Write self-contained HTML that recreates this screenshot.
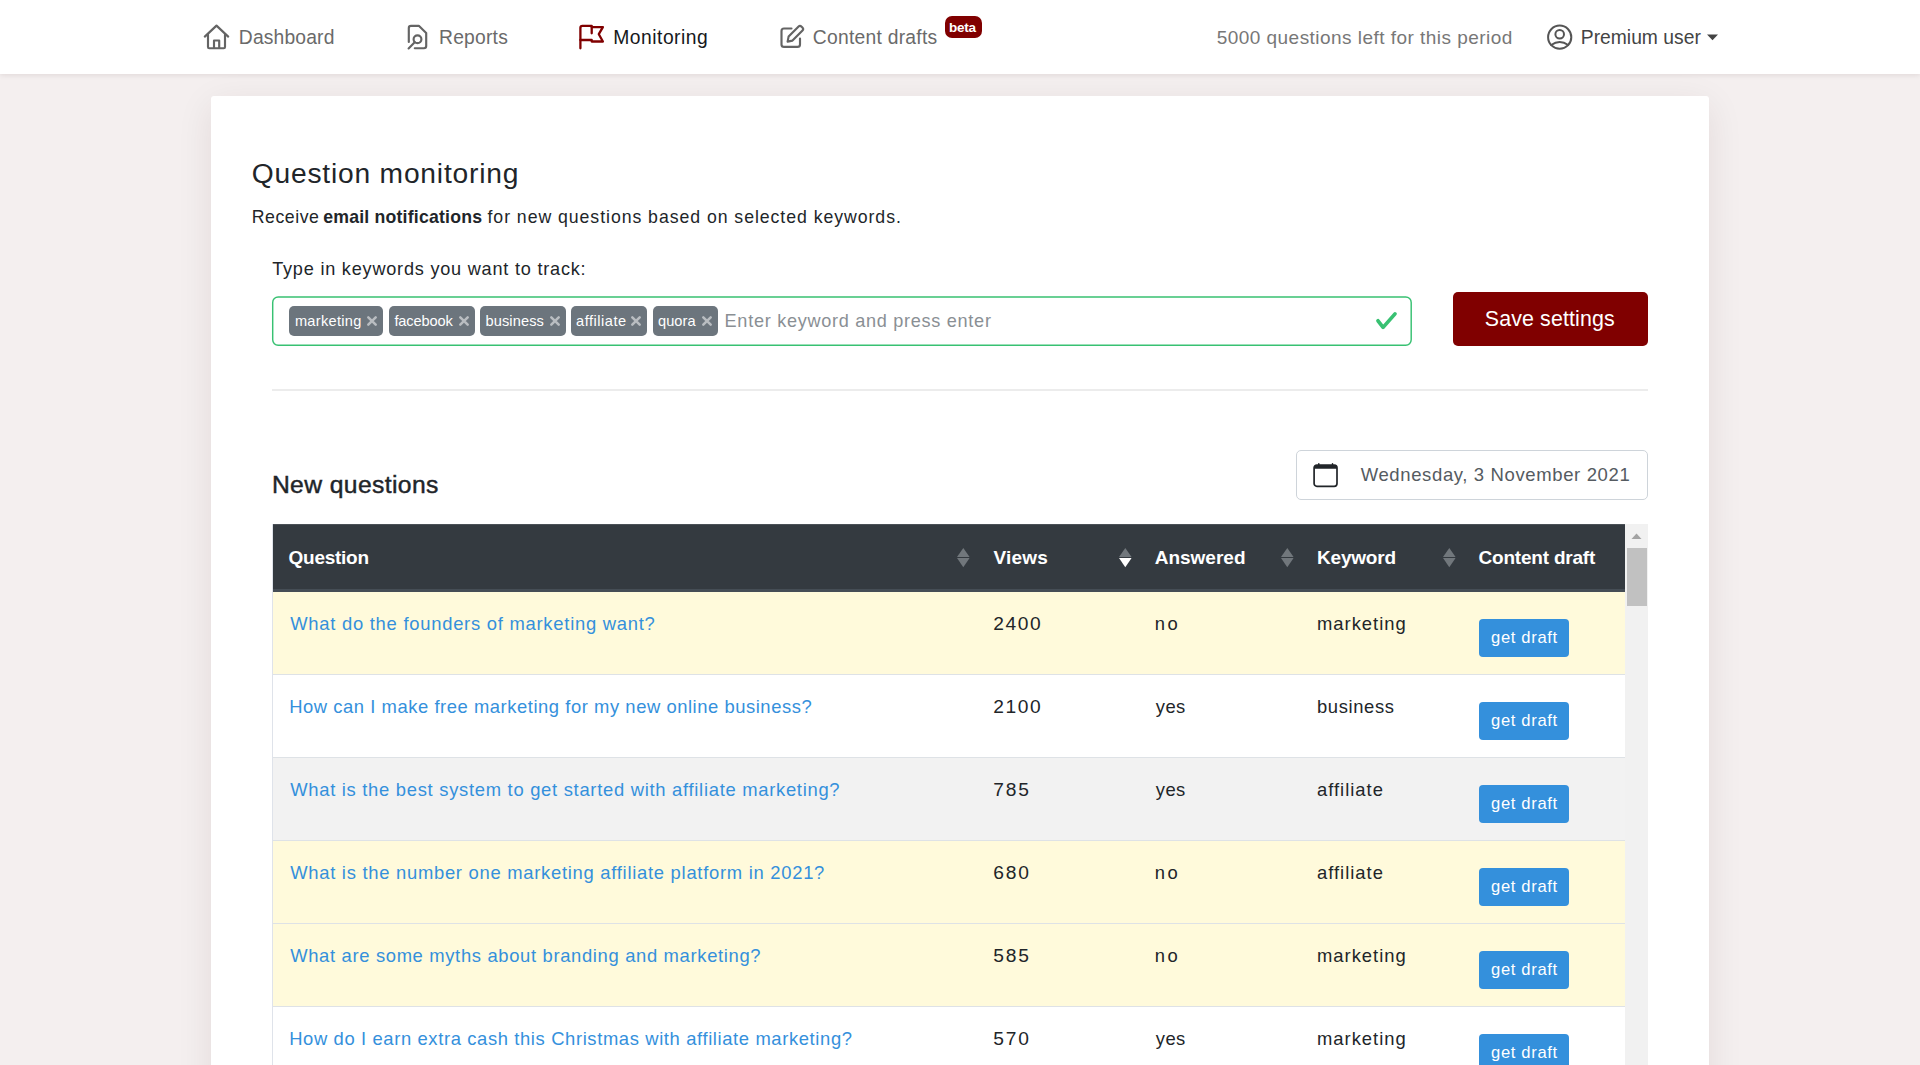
<!DOCTYPE html>
<html lang="en">
<head>
<meta charset="utf-8">
<title>Question monitoring</title>
<style>
*{box-sizing:border-box;margin:0;padding:0}
html,body{width:1920px;height:1065px;overflow:hidden}
body{background:#f4efef;font-family:"Liberation Sans",sans-serif;color:#212529;font-size:18px;position:relative}
.t{position:absolute;white-space:nowrap;line-height:1}
svg{position:absolute;overflow:visible;z-index:3}
.t{z-index:4}
#nav{position:absolute;left:0;top:0;width:1920px;height:74px;background:#fff;box-shadow:0 2.25px 4.5px rgba(40,0,0,.075)}
#beta{position:absolute;left:944.5px;top:15.5px;width:37.5px;height:22.5px;background:#800000;border-radius:7px}
#card{position:absolute;left:211px;top:96px;width:1498px;height:1000px;background:#fff;border-radius:3px;box-shadow:0 9px 36px rgba(60,10,10,.09)}
#inp{position:absolute;left:272px;top:296px;width:1140px;height:50px;border:2px solid #4cc38a;border-radius:6px;background:#fff}
.tag{position:absolute;z-index:1;top:306.4px;height:29.6px;background:#6c757d;border-radius:5px}
#save{position:absolute;left:1452.5px;top:292px;width:195.5px;height:54px;background:#800000;border-radius:5px}
#hr{position:absolute;left:272px;top:389px;width:1376px;height:2px;background:#ececec}
#date{position:absolute;left:1296px;top:450px;width:352px;height:50px;border:1px solid #ced4da;border-radius:5px;background:#fff}
#thead{position:absolute;left:273px;top:524px;width:1352px;height:68px;background:#343a40;border-bottom:3px solid #454d55;border-top:1px solid #4b5157;z-index:2}
.row{position:absolute;left:273px;width:1352px;height:84px;border-top:1px solid #dee2e6;border-bottom:1px solid #dee2e6}
.btn{position:absolute;left:1479.4px;width:89.8px;height:38.3px;background:#3490dc;border-radius:4px}
#track{position:absolute;left:1625px;top:524px;width:23px;height:541px;background:#f1f1f1}
#thumb{position:absolute;left:1627px;top:547.5px;width:20px;height:58.5px;background:#c1c1c1}
#tl{position:absolute;left:272px;top:524px;width:1px;height:541px;background:#dfe3ea}
</style>
</head>
<body>
<div id="nav"></div>
<div id="card"></div>
<div id="beta"></div>
<svg style="left:272px;top:296px;z-index:0" width="1140" height="50" viewBox="0 0 1140 50"><rect x="0.7" y="0.9" width="1138.5" height="48.4" rx="5.5" fill="#fff" stroke="#38c172" stroke-width="1.45"/></svg>
<div id="save"></div>
<div id="hr"></div>
<div id="date"></div>
<div id="tl"></div>
<div id="thead"></div>
<div class="tag" style="left:289.4px;width:93.5px"></div>
<svg style="left:366.8px;top:316px" width="10" height="10" viewBox="0 0 10 10"><path d="M1.3 1.3 L8.7 8.7 M8.7 1.3 L1.3 8.7" stroke="#b9bdc1" stroke-width="2.5" stroke-linecap="round" fill="none"/></svg>
<div class="tag" style="left:388.6px;width:86.2px"></div>
<svg style="left:459.0px;top:316px" width="10" height="10" viewBox="0 0 10 10"><path d="M1.3 1.3 L8.7 8.7 M8.7 1.3 L1.3 8.7" stroke="#b9bdc1" stroke-width="2.5" stroke-linecap="round" fill="none"/></svg>
<div class="tag" style="left:480.3px;width:85.7px"></div>
<svg style="left:549.5px;top:316px" width="10" height="10" viewBox="0 0 10 10"><path d="M1.3 1.3 L8.7 8.7 M8.7 1.3 L1.3 8.7" stroke="#b9bdc1" stroke-width="2.5" stroke-linecap="round" fill="none"/></svg>
<div class="tag" style="left:571.3px;width:76.2px"></div>
<svg style="left:631.2px;top:316px" width="10" height="10" viewBox="0 0 10 10"><path d="M1.3 1.3 L8.7 8.7 M8.7 1.3 L1.3 8.7" stroke="#b9bdc1" stroke-width="2.5" stroke-linecap="round" fill="none"/></svg>
<div class="tag" style="left:652.8px;width:65.7px"></div>
<svg style="left:702.0px;top:316px" width="10" height="10" viewBox="0 0 10 10"><path d="M1.3 1.3 L8.7 8.7 M8.7 1.3 L1.3 8.7" stroke="#b9bdc1" stroke-width="2.5" stroke-linecap="round" fill="none"/></svg>
<div class="row" style="top:591px;background:#fffadb"></div>
<div class="btn" style="top:619px"></div>
<div class="row" style="top:674px;background:#ffffff"></div>
<div class="btn" style="top:702px"></div>
<div class="row" style="top:757px;background:#f2f2f2"></div>
<div class="btn" style="top:785px"></div>
<div class="row" style="top:840px;background:#fffadb"></div>
<div class="btn" style="top:868px"></div>
<div class="row" style="top:923px;background:#fffadb"></div>
<div class="btn" style="top:951px"></div>
<div class="row" style="top:1006px;background:#ffffff"></div>
<div class="btn" style="top:1034px"></div>
<svg style="left:956.7px;top:548.3px" width="12.6" height="19.2" viewBox="0 0 12.6 19.2"><path d="M6.3 0 L12.6 9.1 L0 9.1 Z" fill="#71777c"/><path d="M0 10.1 L12.6 10.1 L6.3 19.2 Z" fill="#71777c"/></svg>
<svg style="left:1118.7px;top:548.3px" width="12.6" height="19.2" viewBox="0 0 12.6 19.2"><path d="M6.3 0 L12.6 9.1 L0 9.1 Z" fill="#71777c"/><path d="M0 10.1 L12.6 10.1 L6.3 19.2 Z" fill="#ffffff"/></svg>
<svg style="left:1280.7px;top:548.3px" width="12.6" height="19.2" viewBox="0 0 12.6 19.2"><path d="M6.3 0 L12.6 9.1 L0 9.1 Z" fill="#71777c"/><path d="M0 10.1 L12.6 10.1 L6.3 19.2 Z" fill="#71777c"/></svg>
<svg style="left:1442.7px;top:548.3px" width="12.6" height="19.2" viewBox="0 0 12.6 19.2"><path d="M6.3 0 L12.6 9.1 L0 9.1 Z" fill="#71777c"/><path d="M0 10.1 L12.6 10.1 L6.3 19.2 Z" fill="#71777c"/></svg>
<div id="track"></div>
<div id="thumb"></div>
<svg style="left:1631px;top:533px" width="11" height="7" viewBox="0 0 11 7"><path d="M5.5 0.5 L10.5 6 L0.5 6 Z" fill="#a3a3a3"/></svg>

<!-- nav icons -->
<svg id="ic-home" style="left:0;top:0" width="1920" height="74" viewBox="0 0 1920 74" fill="none" stroke-linecap="round" stroke-linejoin="round">
 <g stroke="#646464" stroke-width="2.15">
  <path d="M204.8 36.6 L216.5 25.6 L228.2 36.6"/>
  <path d="M208 34.5 V47 Q208 48.2 209.2 48.2 H223.8 Q225 48.2 225 47 V34.5"/>
  <path d="M214 48 V40.5 H219.2 V48"/>
 </g>
 <g stroke="#646464" stroke-width="2.15">
  <path d="M408.8 42 V28 Q408.8 25.8 411 25.8 H418.8 L426.2 33 V46 Q426.2 48.2 424 48.2 H414.8"/>
  <circle cx="417.5" cy="39.2" r="3.9"/>
  <path d="M414.7 42.3 L408.6 48.4"/>
 </g>
 <g stroke="#800000" stroke-width="2.3">
  <path d="M580.4 48.3 V27.8 Q580.4 25.8 582.4 25.8 H591.7 V33.3"/>
  <path d="M591.7 27.1 H602.9 L598.8 34.2 L602.9 41.5 H591.7 V40 H580.4"/>
 </g>
 <g stroke="#646464" stroke-width="2.15">
  <path d="M791.5 28.5 H784 Q781.5 28.5 781.5 31 V44.4 Q781.5 46.9 784 46.9 H797.5 Q800 46.9 800 44.4 V38.5"/>
  <path d="M798.6 26.6 Q800 25.2 801.6 26.8 L802.4 27.6 Q803.9 29.2 802.5 30.6 L792.5 40.6 L787.6 41.6 L788.6 36.6 Z"/>
 </g>
 <g stroke="#555" stroke-width="2">
  <circle cx="1559.7" cy="37.2" r="11.6"/>
  <circle cx="1559.7" cy="34.2" r="4.3"/>
  <path d="M1551.2 45 Q1559.7 39.2 1568.2 45"/>
 </g>
 <path d="M1707 34.4 H1718 L1712.5 40.2 Z" fill="#444" stroke="none"/>
</svg>
<!-- check -->
<svg style="left:1375px;top:311px" width="23" height="20" viewBox="0 0 23 20"><path d="M3 9.8 L8.1 16.4 L20 2.9" fill="none" stroke="#38c172" stroke-width="3.7" stroke-linecap="round" stroke-linejoin="round"/></svg>
<!-- calendar -->
<svg style="left:1313px;top:463px" width="25" height="25" viewBox="0 0 25 25"><rect x="1.1" y="2" width="22.9" height="21.3" rx="2.8" fill="none" stroke="#212529" stroke-width="1.7"/><path d="M1.1 5 Q1.1 2 4 2 H21.1 Q24 2 24 5 V5.8 H1.1 Z" fill="#212529"/><path d="M5.8 0.7 V3 M19.5 0.7 V3" stroke="#212529" stroke-width="1.5" stroke-linecap="round"/></svg>

<div class="t" style="left:238.8px;top:28.0px;font-size:19.3px;color:#6a6a6a;letter-spacing:0.156px;">Dashboard</div>
<div class="t" style="left:439.0px;top:28.0px;font-size:19.3px;color:#6a6a6a;letter-spacing:0.217px;">Reports</div>
<div class="t" style="left:613.3px;top:28.0px;font-size:19.3px;color:#16181b;letter-spacing:0.489px;">Monitoring</div>
<div class="t" style="left:812.8px;top:28.0px;font-size:19.3px;color:#6a6a6a;letter-spacing:0.250px;">Content drafts</div>
<div class="t" style="left:1216.7px;top:28.0px;font-size:19px;color:#777;letter-spacing:0.462px;">5000 questions left for this period</div>
<div class="t" style="left:1580.8px;top:28.0px;font-size:19.3px;color:#444;letter-spacing:0.000px;">Premium user</div>
<div class="t" style="left:949.0px;top:21.0px;font-size:13.5px;color:#fff;letter-spacing:-0.250px;font-weight:bold;">beta</div>
<div class="t" style="left:251.8px;top:159.0px;font-size:28.2px;color:#212529;letter-spacing:0.797px;">Question monitoring</div>
<div class="t" style="left:251.8px;top:209.0px;font-size:17.7px;color:#212529;letter-spacing:0.525px;">Receive</div>
<div class="t" style="left:323.2px;top:209.0px;font-size:17.7px;color:#212529;letter-spacing:0.194px;font-weight:bold;">email notifications</div>
<div class="t" style="left:487.5px;top:209.0px;font-size:17.7px;color:#212529;letter-spacing:0.948px;">for new questions based on selected keywords.</div>
<div class="t" style="left:272.2px;top:260.0px;font-size:18.1px;color:#212529;letter-spacing:0.788px;">Type in keywords you want to track:</div>
<div class="t" style="left:724.6px;top:312.0px;font-size:18.1px;color:#8a8f94;letter-spacing:0.711px;">Enter keyword and press enter</div>
<div class="t" style="left:1484.8px;top:309.0px;font-size:21.4px;color:#fff;letter-spacing:0.117px;">Save settings</div>
<div class="t" style="left:271.9px;top:473.0px;font-size:24.7px;color:#212529;letter-spacing:0.383px;-webkit-text-stroke:0.45px #212529;">New questions</div>
<div class="t" style="left:1360.7px;top:466.0px;font-size:18.5px;color:#555b61;letter-spacing:0.628px;">Wednesday, 3 November 2021</div>
<div class="t" style="left:288.5px;top:548.0px;font-size:19px;color:#fff;letter-spacing:-0.250px;font-weight:bold;">Question</div>
<div class="t" style="left:993.4px;top:548.0px;font-size:19px;color:#fff;letter-spacing:0.225px;font-weight:bold;">Views</div>
<div class="t" style="left:1154.7px;top:548.0px;font-size:19px;color:#fff;letter-spacing:0.000px;font-weight:bold;">Answered</div>
<div class="t" style="left:1317.0px;top:548.0px;font-size:19px;color:#fff;letter-spacing:-0.200px;font-weight:bold;">Keyword</div>
<div class="t" style="left:1478.5px;top:548.0px;font-size:19px;color:#fff;letter-spacing:-0.208px;font-weight:bold;">Content draft</div>
<div class="t" style="left:294.9px;top:314.0px;font-size:14.6px;color:#fff;letter-spacing:0.300px;">marketing</div>
<div class="t" style="left:394.4px;top:314.0px;font-size:14.6px;color:#fff;letter-spacing:-0.100px;">facebook</div>
<div class="t" style="left:485.5px;top:314.0px;font-size:14.6px;color:#fff;letter-spacing:0.107px;">business</div>
<div class="t" style="left:576.0px;top:314.0px;font-size:14.6px;color:#fff;letter-spacing:0.531px;">affiliate</div>
<div class="t" style="left:658.0px;top:314.0px;font-size:14.6px;color:#fff;letter-spacing:0.062px;">quora</div>
<div class="t" style="left:290.2px;top:615.0px;font-size:18.4px;color:#3490dc;letter-spacing:0.745px;">What do the founders of marketing want?</div>
<div class="t" style="left:993.3px;top:614.0px;font-size:19.2px;color:#212529;letter-spacing:1.567px;">2400</div>
<div class="t" style="left:1154.7px;top:615.0px;font-size:18.4px;color:#212529;letter-spacing:2.600px;">no</div>
<div class="t" style="left:1317.0px;top:615.0px;font-size:18.4px;color:#212529;letter-spacing:1.000px;">marketing</div>
<div class="t" style="left:1491.1px;top:630.0px;font-size:16.6px;color:#fff;letter-spacing:0.650px;">get draft</div>
<div class="t" style="left:289.2px;top:698.0px;font-size:18.4px;color:#3490dc;letter-spacing:0.550px;">How can I make free marketing for my new online business?</div>
<div class="t" style="left:993.3px;top:697.0px;font-size:19.2px;color:#212529;letter-spacing:1.567px;">2100</div>
<div class="t" style="left:1155.7px;top:698.0px;font-size:18.4px;color:#212529;letter-spacing:0.500px;">yes</div>
<div class="t" style="left:1317.0px;top:698.0px;font-size:18.4px;color:#212529;letter-spacing:0.614px;">business</div>
<div class="t" style="left:1491.1px;top:713.0px;font-size:16.6px;color:#fff;letter-spacing:0.650px;">get draft</div>
<div class="t" style="left:290.2px;top:781.0px;font-size:18.4px;color:#3490dc;letter-spacing:0.711px;">What is the best system to get started with affiliate marketing?</div>
<div class="t" style="left:993.3px;top:780.0px;font-size:19.2px;color:#212529;letter-spacing:1.850px;">785</div>
<div class="t" style="left:1155.7px;top:781.0px;font-size:18.4px;color:#212529;letter-spacing:0.500px;">yes</div>
<div class="t" style="left:1317.0px;top:781.0px;font-size:18.4px;color:#212529;letter-spacing:1.000px;">affiliate</div>
<div class="t" style="left:1491.1px;top:796.0px;font-size:16.6px;color:#fff;letter-spacing:0.650px;">get draft</div>
<div class="t" style="left:290.2px;top:864.0px;font-size:18.4px;color:#3490dc;letter-spacing:0.725px;">What is the number one marketing affiliate platform in 2021?</div>
<div class="t" style="left:993.3px;top:863.0px;font-size:19.2px;color:#212529;letter-spacing:1.850px;">680</div>
<div class="t" style="left:1154.7px;top:864.0px;font-size:18.4px;color:#212529;letter-spacing:2.600px;">no</div>
<div class="t" style="left:1317.0px;top:864.0px;font-size:18.4px;color:#212529;letter-spacing:1.000px;">affiliate</div>
<div class="t" style="left:1491.1px;top:879.0px;font-size:16.6px;color:#fff;letter-spacing:0.650px;">get draft</div>
<div class="t" style="left:290.2px;top:947.0px;font-size:18.4px;color:#3490dc;letter-spacing:0.663px;">What are some myths about branding and marketing?</div>
<div class="t" style="left:993.3px;top:946.0px;font-size:19.2px;color:#212529;letter-spacing:1.850px;">585</div>
<div class="t" style="left:1154.7px;top:947.0px;font-size:18.4px;color:#212529;letter-spacing:2.600px;">no</div>
<div class="t" style="left:1317.0px;top:947.0px;font-size:18.4px;color:#212529;letter-spacing:1.000px;">marketing</div>
<div class="t" style="left:1491.1px;top:962.0px;font-size:16.6px;color:#fff;letter-spacing:0.650px;">get draft</div>
<div class="t" style="left:289.2px;top:1030.0px;font-size:18.4px;color:#3490dc;letter-spacing:0.622px;">How do I earn extra cash this Christmas with affiliate marketing?</div>
<div class="t" style="left:993.3px;top:1029.0px;font-size:19.2px;color:#212529;letter-spacing:1.850px;">570</div>
<div class="t" style="left:1155.7px;top:1030.0px;font-size:18.4px;color:#212529;letter-spacing:0.500px;">yes</div>
<div class="t" style="left:1317.0px;top:1030.0px;font-size:18.4px;color:#212529;letter-spacing:1.000px;">marketing</div>
<div class="t" style="left:1491.1px;top:1045.0px;font-size:16.6px;color:#fff;letter-spacing:0.650px;">get draft</div>
</body>
</html>
